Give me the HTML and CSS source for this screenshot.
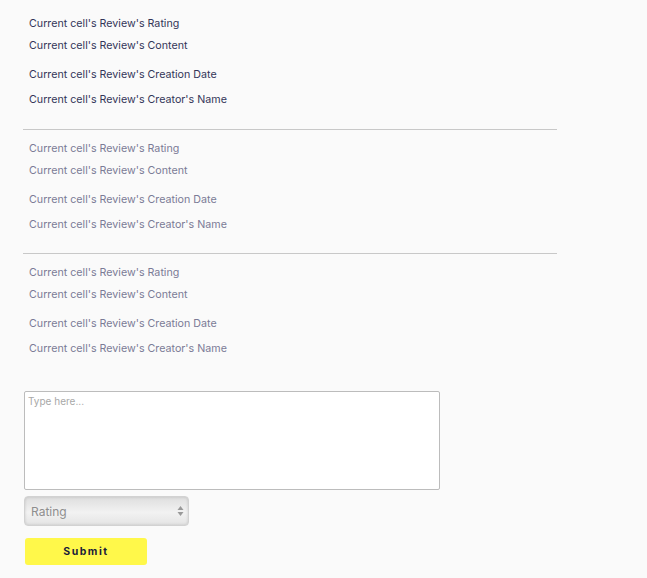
FILE: index.html
```html
<!DOCTYPE html>
<html>
<head>
<meta charset="utf-8">
<link rel="stylesheet" href="styles.css">
</head>
<body>
<div class="page">
  <div class="review review--first">
    <div class="field f-rating">Current cell's Review's Rating</div>
    <div class="field f-content">Current cell's Review's Content</div>
    <div class="field f-date">Current cell's Review's Creation Date</div>
    <div class="field f-name">Current cell's Review's Creator's Name</div>
  </div>
  <div class="review review--muted">
    <div class="field f-rating">Current cell's Review's Rating</div>
    <div class="field f-content">Current cell's Review's Content</div>
    <div class="field f-date">Current cell's Review's Creation Date</div>
    <div class="field f-name">Current cell's Review's Creator's Name</div>
  </div>
  <div class="review review--muted review--last">
    <div class="field f-rating">Current cell's Review's Rating</div>
    <div class="field f-content">Current cell's Review's Content</div>
    <div class="field f-date">Current cell's Review's Creation Date</div>
    <div class="field f-name">Current cell's Review's Creator's Name</div>
  </div>
  <form class="form">
    <textarea class="textarea" placeholder="Type here..."></textarea>
    <div class="select">
      <span class="select-label">Rating</span>
      <svg class="select-arrows" width="7" height="12" viewBox="0 0 7 12"><path d="M3.5 1 L6.5 5 H0.5 Z" fill="#999"/><path d="M3.5 11 L6.5 7 H0.5 Z" fill="#999"/></svg>
    </div>
    <button type="button" class="submit">Submit</button>
  </form>
</div>
</body>
</html>
```
FILE: styles.css
```css
html, body {
  margin: 0;
  padding: 0;
  background: #fafafa;
}
body {
  font-family: Inter, "Liberation Sans", sans-serif;
}
.page {
  padding: 17px 0 0 23px;
  width: 534px;
}
.review {
  padding: 0 0 22px 6px;
  border-bottom: 1px solid #c8c8c8;
}
.review--muted {
  padding-top: 12px;
  padding-bottom: 21px;
}
.review--last {
  border-bottom: none;
  padding-bottom: 0;
}
.field {
  font-size: 10.7px;
  line-height: 14px;
  color: #333558;
}
.review--muted .field {
  color: #7a7b96;
}
.f-rating { height: 22px; }
.f-content { height: 29px; }
.f-date { height: 25px; }
.f-name { height: 14px; }
.form {
  display: flex;
  flex-direction: column;
  align-items: flex-start;
  padding-top: 35px;
  padding-left: 1px;
}
.textarea {
  box-sizing: border-box;
  width: 416px;
  height: 99px;
  margin: 0;
  padding: 3px 3px;
  border: 1px solid #bcbcbc;
  border-radius: 2px;
  background: #fff;
  font-family: Inter, "Liberation Sans", sans-serif;
  font-size: 10px;
  resize: none;
}
.textarea::placeholder {
  color: #a8a8a8;
}
.select {
  box-sizing: border-box;
  margin-top: 6px;
  width: 165px;
  height: 30px;
  border: 1px solid #d2d2d2;
  border-radius: 4px;
  background: linear-gradient(#dedede, #f2f2f2 55%, #e4e4e4);
  box-shadow: inset 0 0 3px rgba(0,0,0,0.15);
  display: flex;
  align-items: center;
  justify-content: space-between;
  padding: 0 4px 0 6px;
}
.select-label {
  font-size: 12px;
  color: #8e8e8e;
}
.select-arrows {
  display: block;
}
.submit {
  margin-top: 12px;
  margin-left: 1px;
  width: 122px;
  height: 27px;
  border: none;
  border-radius: 3px;
  background: #fff84a;
  color: #1c1c3a;
  font-family: Inter, "Liberation Sans", sans-serif;
  font-size: 10.5px;
  font-weight: 700;
  letter-spacing: 1.5px;
  padding: 0;
}
```
